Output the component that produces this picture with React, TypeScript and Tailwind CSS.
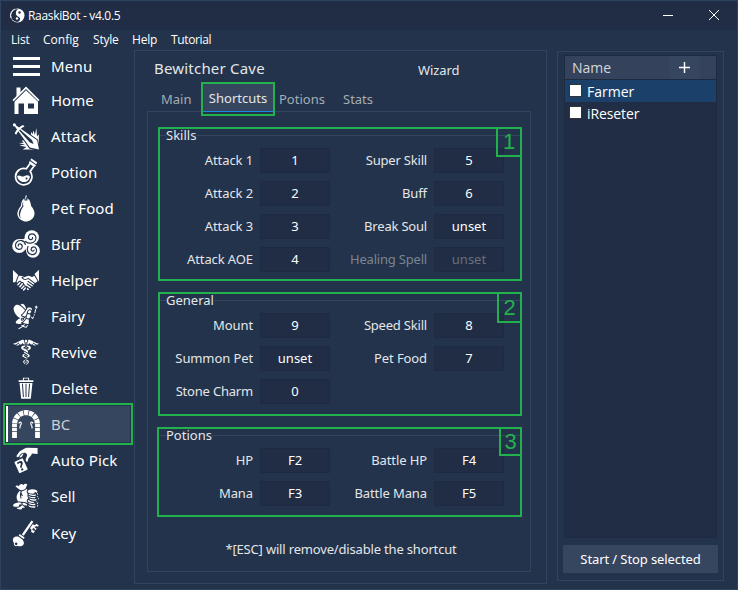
import type { ReactNode } from "react";
import {
  GiCaduceus,
  GiCardPickup,
  GiCash,
  GiFairy,
  GiKey,
  GiPear,
  GiPointySword,
  GiShakingHands,
  GiTrashCan,
} from "react-icons/gi";

function MenuIcon() {
  return (
    <span className="flex w-7 flex-col gap-[5px] pl-px">
      <span className="h-[3px] w-[27px] bg-white" />
      <span className="h-[3px] w-[27px] bg-white" />
      <span className="h-[3px] w-[27px] bg-white" />
    </span>
  );
}

function HouseIcon() {
  return (
    <svg width="28" height="28" viewBox="0 0 28 28" fill="currentColor">
      <path d="M4.5 1.500h4v5l-4 4z" />
      <path d="M14 .5 .5 14l1.200 1.200L14 3l12.300 12.200 1.200-1.200z" />
      <path fillRule="evenodd" d="M14 4.300 2.500 15.700V28h4V17.500H12V28h14V15.700zM16 17.500h6v5h-6z" />
    </svg>
  );
}

function FlaskIcon() {
  return (
    <svg width="28" height="28" viewBox="0 0 28 28" fill="none" stroke="currentColor">
      <path
        d="M14.300 10.800 18.300 5.300 22 7.900 18.100 13.400A8.200 8.200 0 1 1 14.300 10.800Z"
        strokeWidth="1.700"
        strokeLinejoin="round"
      />
      <path d="M17.300 3.800 23.500 8M18.900 1.300 24.700 5.400" strokeWidth="1.900" />
      <path
        d="M5.200 18c2.600-1.800 4.300 1.400 7 .2 2-.9 4-1.400 5.700.2-.3 3.500-2.900 5.600-6 5.600-3.500 0-6.300-2.500-6.700-6z"
        fill="currentColor"
        stroke="none"
      />
      <circle cx="14.500" cy="20.500" r="1" fill="#22334b" stroke="none" />
    </svg>
  );
}

function SpiralsIcon() {
  return (
    <svg width="28" height="28" viewBox="0 0 28 28" fill="none">
      <g fill="currentColor">
        <circle cx="19.800" cy="7.300" r="7.100" />
        <circle cx="7.200" cy="16" r="7" />
        <circle cx="21" cy="20.800" r="6.900" />
        <path d="M8 9c4 1 6-1 6-4l8 9 1 3-8 6c0-4-2-5-5-2z" />
      </g>
      <g stroke="#22334b" strokeWidth="1.200" strokeLinecap="round">
        <path d="M13.500 11.500c3 2.500 7.500 2.300 9.800-1 1.900-3-.1-6.700-3.500-6.600-3 .1-4.300 3.400-2.500 5.100 1.600 1.400 3.800.2 3.200-1.500" />
        <path d="M13.300 14.500c-.4-4.200-6.200-5.300-8.800-2.200-2.200 2.700-.9 6.700 2.300 7.100 2.900.3 4.600-3 2.700-4.900-1.600-1.500-3.900-.2-3.200 1.500" />
        <path d="M16 16.500c-2 3.700 0 7.900 4.100 8.200 3.600.2 5.700-3.700 3.900-6.400-1.700-2.400-5.100-1.200-4.900 1.200.2 2 2.700 2.200 3 .5" />
      </g>
    </svg>
  );
}

function ArchIcon() {
  return (
    <svg width="28" height="28" viewBox="0 0 28 28" fill="none" stroke="currentColor">
      <path d="M2.500 28V14" strokeWidth="4.800" strokeDasharray="6 .7 3.500 .7" />
      <path d="M25.500 28V14" strokeWidth="4.800" strokeDasharray="6 .7 3.500 .7" />
      <path d="M2.700 13.600A11.300 11 0 0 1 25.300 13.600" strokeWidth="5.200" strokeDasharray="4.400 .7" />
      <path d="M7 13.500C7.500 11.500 9.300 11.800 9.300 13.500c0 1.300-1.300 1.800-1.300 3v2" strokeWidth="1.100" />
      <path d="M21 13.500C20.500 11.500 18.700 11.800 18.700 13.500c0 1.300 1.300 1.800 1.300 3v2" strokeWidth="1.100" />
    </svg>
  );
}

function Logo() {
  return (
    <svg width="15" height="15" viewBox="0 0 15 15">
      <circle cx="7.500" cy="7.500" r="7" fill="#fff" />
      <path d="M8 1A6.400 6.400 0 0 0 7 14c2.500-.5 3.500-2 3-3.700-.6-1.800-3.500-1.700-4-4C5.500 4 6.400 2 8 1Z" fill="#202d44" />
      <path d="M4.500 1.200A7 7 0 0 0 1 10" stroke="#fff" strokeWidth="1" fill="none" />
      <circle cx="9.500" cy="4.500" r="1.200" fill="#202d44" />
      <circle cx="7" cy="10.500" r="1.200" fill="#fff" />
    </svg>
  );
}

type NavEntry = { label: string; icon: ReactNode; active?: boolean; className?: string };

const nav: NavEntry[] = [
  { label: "Home", icon: <HouseIcon /> },
  { label: "Attack", icon: <GiPointySword size={29} />, className: "tracking-[0.2px]" },
  { label: "Potion", icon: <FlaskIcon />, className: "tracking-[0.1px]" },
  { label: "Pet Food", icon: <GiPear size={29} />, className: "tracking-[0.1px]" },
  { label: "Buff", icon: <SpiralsIcon /> },
  { label: "Helper", icon: <GiShakingHands size={29} /> },
  { label: "Fairy", icon: <GiFairy size={29} /> },
  { label: "Revive", icon: <GiCaduceus size={29} />, className: "tracking-[0.2px]" },
  { label: "Delete", icon: <GiTrashCan size={28} className="-mt-1" />, className: "tracking-[0.2px]" },
  { label: "BC", icon: <ArchIcon />, active: true },
  { label: "Auto Pick", icon: <GiCardPickup size={29} />, className: "tracking-[0.1px]" },
  { label: "Sell", icon: <GiCash size={29} /> },
  { label: "Key", icon: <GiKey size={29} />, className: "pt-0.5" },
];

function NavRow({ label, icon, active, className = "" }: NavEntry) {
  if (active) {
    return (
      <div className="-my-[3px] ml-[2px] h-[42px] w-[130px] border-2 border-[#22b14c] py-px pl-px pr-px">
        <div className="flex h-9 items-center border-l-2 border-white bg-[#37465f] pl-1 text-[#c9cdd4]">
          <span className="flex w-7 justify-center text-white">{icon}</span>
          <span className="ml-[11px]">{label}</span>
        </div>
      </div>
    );
  }
  return (
    <div className={`flex h-9 items-center pl-[11px] ${className}`}>
      <span className="flex w-7 justify-center">{icon}</span>
      <span className="ml-[11px]">{label}</span>
    </div>
  );
}

type Field = { label: string; value: string; off?: boolean; tight?: boolean };

function Group({
  title,
  mark,
  fields,
  className,
  markClass,
}: {
  title: string;
  mark: string;
  fields: Field[];
  className: string;
  markClass: string;
}) {
  return (
    <section className={`relative border-2 border-[#22b14c] ${className}`}>
      <div className="flex h-3 items-center">
        <span className="h-px w-1.5 bg-[#35455f]" />
        <h3 className="whitespace-nowrap leading-3">{title}</h3>
        <span className="h-px grow bg-[#35455f]" />
      </div>
      <div className="mt-[7px] grid grid-cols-[100px_70px_104px_70px] gap-y-2">
        {fields.map((f) => (
          <div key={f.label} className={`col-span-2 grid grid-cols-subgrid ${f.off ? "text-[#7d8591]" : ""}`}>
            <span
              className={`whitespace-nowrap pr-[7px] text-right leading-[25px] ${f.tight ? "tracking-[-0.2px]" : "tracking-[-0.1px]"}`}
            >
              {f.label}
            </span>
            <span
              className={`h-[25px] border border-[#1e2a40] bg-[#202d45] text-center leading-[23px] ${
                f.off ? "text-[#6b6f78]" : "text-white"
              }`}
            >
              {f.value}
            </span>
          </div>
        ))}
      </div>
      <span
        className={`absolute -right-0.5 -top-0.5 border-2 border-[#22b14c] text-center font-['Liberation_Sans',sans-serif] text-[22px] text-[#22b14c] ${markClass}`}
      >
        {mark}
      </span>
    </section>
  );
}

const skills: Field[] = [
  { label: "Attack 1", value: "1" },
  { label: "Super Skill", value: "5", tight: true },
  { label: "Attack 2", value: "2" },
  { label: "Buff", value: "6" },
  { label: "Attack 3", value: "3" },
  { label: "Break Soul", value: "unset", tight: true },
  { label: "Attack AOE", value: "4" },
  { label: "Healing Spell", value: "unset", off: true, tight: true },
];

const general: Field[] = [
  { label: "Mount", value: "9" },
  { label: "Speed Skill", value: "8", tight: true },
  { label: "Summon Pet", value: "unset" },
  { label: "Pet Food", value: "7" },
  { label: "Stone Charm", value: "0", tight: true },
];

const potions: Field[] = [
  { label: "HP", value: "F2" },
  { label: "Battle HP", value: "F4" },
  { label: "Mana", value: "F3" },
  { label: "Battle Mana", value: "F5" },
];

export default function App() {
  return (
    <div className="flex h-[590px] w-[738px] flex-col overflow-hidden border border-[#2d4360] bg-[#22334b] font-['Noto_Sans',sans-serif] text-[13px] text-[#e4e6e9]">
      <header className="flex h-[29px] shrink-0 items-center bg-[#202d44] pl-[9px] font-['Open_Sans',sans-serif] text-[12px] text-white">
        <Logo />
        <span className="ml-[3px] grow tracking-[-0.32px]">RaaskiBot - v4.0.5</span>
        <svg width="60" height="12" viewBox="0 0 60 12" className="mb-px mr-[17px]" stroke="#fff" fill="none">
          <path d="M3 6.500h10" />
          <path d="m49 1 10 10M59 1 49 11" />
        </svg>
      </header>
      <nav className="flex h-5 shrink-0 items-center pl-2.5 font-['Open_Sans',sans-serif] text-[12px] text-white">
        <span className="w-8 tracking-[-0.2px]">List</span>
        <span className="w-[50px]">Config</span>
        <span className="w-[39px] tracking-[-0.2px]">Style</span>
        <span className="w-[39px] tracking-[-0.2px]">Help</span>
        <span className="tracking-[-0.35px]">Tutorial</span>
      </nav>
      <div className="flex grow">
        <aside className="w-[133px] shrink-0 text-[15px] text-white">
          <div className="flex h-8 items-center pl-[11px]">
            <MenuIcon />
            <span className="ml-[11px] tracking-[0.2px]">Menu</span>
          </div>
          {nav.map((n) => (
            <NavRow key={n.label} {...n} />
          ))}
        </aside>

        <main className="h-[534px] w-[413px] shrink-0 border border-[#324360]">
          <div className="flex h-[31px] items-end pl-[19px]">
            <h1 className="w-[264px] text-[15px] leading-[27px] tracking-[0.2px]">Bewitcher Cave</h1>
            <span className="leading-[23px] tracking-[-0.1px]">Wizard</span>
          </div>
          <div className="flex h-[34px] pl-[26px] leading-[34px] text-[#a6acb5]">
            <span className="w-10">Main</span>
            <div className="relative z-10 h-[34px] w-[74px] border-2 border-[#22b14c]">
              <div className="h-[28px] border-b border-[#1e88e5] bg-[#37465f] text-center leading-[28px] text-[#e4e6e9]">
                Shortcuts
              </div>
            </div>
            <span className="w-[68px] pl-1">Potions</span>
            <span>Stats</span>
          </div>
          <div className="-mt-[5px] ml-3 h-[461px] w-[384px] border border-[#324360] pt-[15px]">
            <Group title="Skills" mark="1" fields={skills} className="ml-2.5 h-[154px] w-[364px]" markClass="h-[30px] w-[26px] leading-[26px]" />
            <Group title="General" mark="2" fields={general} className="ml-2.5 mt-[11px] h-[124px] w-[364px]" markClass="h-[31px] w-[25px] leading-[28px]" />
            <Group title="Potions" mark="3" fields={potions} className="ml-[9px] mt-[11px] h-[90px] w-[365px] pl-px" markClass="h-[29px] w-[23px] leading-[25px]" />
            <p className="mt-[23px] pl-1 text-center tracking-[-0.17px]">*[ESC] will remove/disable the shortcut</p>
          </div>
        </main>

        <aside className="ml-2.5 mt-px flex h-[530px] w-[167px] flex-col border border-[#324360] px-[5px] pt-[3px] text-white">
          <div className="ml-px h-[483px] w-[153px] border border-[#1e2a40] bg-[#202d45] font-['Open_Sans',sans-serif] text-[14px]">
            <div className="flex h-6 items-center border-b border-[#1e2a40] bg-[#34435b]">
              <span className="w-[104px] pl-[7px] text-[#d3d6da]">Name</span>
              <span className="flex h-full w-[31px] items-center justify-center bg-[#37465f]">
                <svg width="11" height="11" viewBox="0 0 11 11" stroke="#fff" strokeWidth="1.400">
                  <path d="M0 5.500h11M5.500 0v11" />
                </svg>
              </span>
            </div>
            <div className="flex h-[22px] items-center bg-[#1b416a] pl-1">
              <span className="-mt-0.5 h-[13px] w-[13px] border border-[#333] bg-white" />
              <span className="ml-[5px]">Farmer</span>
            </div>
            <div className="flex h-[22px] items-center pl-1">
              <span className="-mt-0.5 h-[13px] w-[13px] border border-[#333] bg-white" />
              <span className="ml-[5px] tracking-[-0.1px]">iReseter</span>
            </div>
          </div>
          <button className="mt-[7px] h-7 w-[155px] bg-[#37465f] leading-[27px] tracking-[-0.1px]">Start / Stop selected</button>
        </aside>
      </div>
    </div>
  );
}
